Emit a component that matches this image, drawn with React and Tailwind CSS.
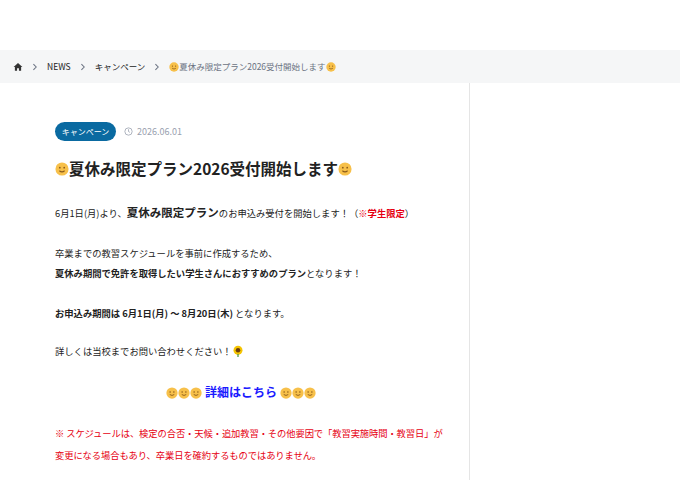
import React from 'react'

const font = { fontFamily: '"Noto Sans CJK JP", "Noto Sans", sans-serif' }

function Smile({ size = 12 }) {
  return (
    <svg width={size} height={size} viewBox="0 0 16 16" className="inline-block align-[-2px]">
      <circle cx="8" cy="8" r="7.5" fill="#f7c04a" />
      <circle cx="5.5" cy="6.5" r="1" fill="#8a5a1a" />
      <circle cx="10.5" cy="6.5" r="1" fill="#8a5a1a" />
      <path d="M5 10 Q8 12.5 11 10" stroke="#8a5a1a" strokeWidth="1.2" fill="none" />
    </svg>
  )
}

function Sunflower() {
  return (
    <svg width="12" height="12" viewBox="0 0 16 16" className="inline-block align-[-2px]">
      <circle cx="8" cy="7" r="6" fill="#f5c400" />
      <circle cx="8" cy="7" r="3" fill="#6b3e10" />
      <path d="M8 12 L8 16" stroke="#3a8a2a" strokeWidth="1.5" />
    </svg>
  )
}

function Chevron() {
  return (
    <svg width="8" height="8" viewBox="0 0 10 10" className="text-gray-500">
      <path d="M3 1.5 L6.5 5 L3 8.5" stroke="currentColor" strokeWidth="1.3" fill="none" />
    </svg>
  )
}

export default function App() {
  return (
    <div className="w-[680px] h-[480px] bg-white overflow-hidden text-[#222]" style={font}>
      <div className="h-[50px]" />
      <nav className="h-[33px] bg-[#f5f6f7] flex items-center gap-[8px] pl-[13px] text-[8.5px]">
        <svg width="10" height="10" viewBox="0 0 16 16">
          <path d="M8 1.5 L1 8 H3 V14 H6.5 V10 H9.5 V14 H13 V8 H15 Z" fill="#333" />
        </svg>
        <Chevron />
        <span>NEWS</span>
        <Chevron />
        <span>キャンペーン</span>
        <Chevron />
        <span className="text-gray-500 flex items-center">
          <Smile size={10} />夏休み限定プラン2026受付開始します<Smile size={10} />
        </span>
      </nav>
      <div className="flex h-[397px]">
        <main className="w-[470px] border-r border-[#e5e5e5] pl-[55px] pr-[22px] pt-[39px]">
          <div className="flex items-center gap-[8px]">
            <span className="bg-[#0a6aa1] text-white text-[8px] rounded-full w-[61px] h-[19px] flex items-center justify-center">
              キャンペーン
            </span>
            <span className="flex items-center gap-[4px] text-[9px] text-gray-400">
              <svg width="9" height="9" viewBox="0 0 16 16">
                <circle cx="8" cy="8" r="6.5" stroke="currentColor" strokeWidth="1.4" fill="none" />
                <path d="M8 4 V8 L10.5 9.5" stroke="currentColor" strokeWidth="1.4" fill="none" />
              </svg>
              2026.06.01
            </span>
          </div>
          <h1 className="mt-[16px] text-[15.5px] font-bold flex items-center">
            <Smile size={14} />夏休み限定プラン2026受付開始します<Smile size={14} />
          </h1>
          <div className="text-[9.3px] leading-[20px] mt-[22px]">
            <p>
              6月1日(月)より、<b className="text-[11.5px]">夏休み限定プラン</b>のお申込み受付を開始します！（
              <b className="text-[#e60012]">※学生限定</b>）
            </p>
            <p className="mt-[20px]">卒業までの教習スケジュールを事前に作成するため、</p>
            <p>
              <b>夏休み期間で免許を取得したい学生さんにおすすめのプラン</b>となります！
            </p>
            <p className="mt-[20px]">
              <b>お申込み期間は 6月1日(月) 〜 8月20日(木)</b> となります。
            </p>
            <p className="mt-[18px]">
              詳しくは当校までお問い合わせください！<Sunflower />
            </p>
            <p className="mt-[21px] text-center font-bold text-[#1a1aff] text-[12px] pr-[20px]">
              <Smile /><Smile /><Smile /> 詳細はこちら <Smile /><Smile /><Smile />
            </p>
            <p className="mt-[20px] text-[#e60012] leading-[22px] tracking-[-0.1px]">
              ※ スケジュールは、検定の合否・天候・追加教習・その他要因で「教習実施時間・教習日」が変更になる場合もあり、卒業日を確約するものではありません。
            </p>
          </div>
        </main>
        <aside className="flex-1" />
      </div>
    </div>
  )
}
